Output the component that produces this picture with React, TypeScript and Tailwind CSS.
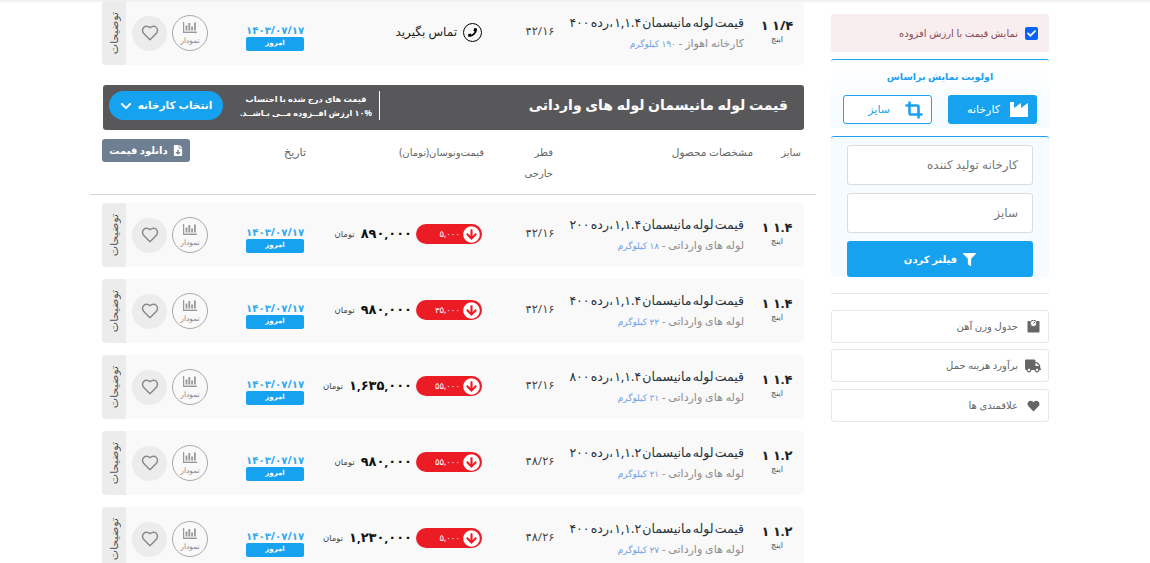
import React from "react";
import { FaArrowCircleDown, FaCheck, FaChevronDown, FaFileDownload, FaFilter, FaHeart, FaTruck, FaPhone } from "react-icons/fa";
import { LuCrop, LuHeart } from "react-icons/lu";

type Row = { size: string; title: string; sub: string; kg: string; od: string; drop: string; price: string };

const rows: Row[] = [
  { size: "۱ ۱.۴", title: "قیمت لوله مانیسمان ۱,۱.۴ ،رده ۲۰۰", sub: "لوله های وارداتی", kg: "۱۸ کیلوگرم", od: "۴۲/۱۶", drop: "۵,۰۰۰", price: "۸۹۰,۰۰۰" },
  { size: "۱ ۱.۴", title: "قیمت لوله مانیسمان ۱,۱.۴ ،رده ۴۰۰", sub: "لوله های وارداتی", kg: "۲۲ کیلوگرم", od: "۴۲/۱۶", drop: "۳۵,۰۰۰", price: "۹۸۰,۰۰۰" },
  { size: "۱ ۱.۴", title: "قیمت لوله مانیسمان ۱,۱.۴ ،رده ۸۰۰", sub: "لوله های وارداتی", kg: "۳۱ کیلوگرم", od: "۴۲/۱۶", drop: "۵۵,۰۰۰", price: "۱,۶۳۵,۰۰۰" },
  { size: "۱ ۱.۲", title: "قیمت لوله مانیسمان ۱,۱.۲ ،رده ۲۰۰", sub: "لوله های وارداتی", kg: "۲۱ کیلوگرم", od: "۴۸/۲۶", drop: "۵۵,۰۰۰", price: "۹۸۰,۰۰۰" },
  { size: "۱ ۱.۲", title: "قیمت لوله مانیسمان ۱,۱.۲ ،رده ۴۰۰", sub: "لوله های وارداتی", kg: "۲۷ کیلوگرم", od: "۴۸/۲۶", drop: "۵,۰۰۰", price: "۱,۲۳۰,۰۰۰" },
];

function ChartIcon() {
  return (
    <svg width="14" height="11" viewBox="0 0 14 11" fill="#999" aria-hidden="true">
      <rect x="0" y="0" width="1.2" height="11" />
      <rect x="0" y="9.6" width="14" height="1.4" />
      <rect x="2.6" y="3.5" width="1.8" height="5" />
      <rect x="5.4" y="1" width="1.8" height="7.5" />
      <rect x="8.2" y="4.5" width="1.8" height="4" />
      <rect x="11" y="0.5" width="1.8" height="8" />
    </svg>
  );
}

function Factory() {
  return (
    <svg width="18" height="15" viewBox="0 0 18 15" fill="#fff" aria-hidden="true">
      <path d="M0 0h4v6l7-5v5l7-5v14H0z" />
    </svg>
  );
}

function Scale() {
  return (
    <svg width="13" height="13" viewBox="0 0 13 13" aria-hidden="true">
      <path fill="#666" d="M1.5 1h1.2a4 4 0 0 0 7.6 0h1.2c.6 0 1 .4 1 1v9.5c0 .6-.4 1-1 1h-10c-.6 0-1-.4-1-1V2c0-.6.4-1 1-1z" />
      <circle cx="6.5" cy="3.4" r="3.2" fill="#fff" stroke="#666" strokeWidth="1" />
      <path d="M6.5 3.6 8 1.8" stroke="#666" strokeWidth="1" />
    </svg>
  );
}

function Tail() {
  return (
    <>
      <div className="flex w-[58px] shrink-0 flex-col items-stretch pt-[10px]">
        <span dir="ltr" className="text-center text-[10.2px] font-bold leading-[11px] text-[#35a8f0] whitespace-nowrap">۱۴۰۳/۰۷/۱۷</span>
        <span className="mt-[1px] flex h-[14px] items-start justify-center rounded-[2px] bg-[#16a2ef] text-[7px] font-bold leading-[11px] text-white">امروز</span>
      </div>
      <div className="w-[38px] shrink-0" />
      <div className="flex h-[36px] w-[36px] shrink-0 flex-col items-center justify-center rounded-full border border-[#a8a8a8]">
        <ChartIcon />
        <span className="mt-[3px] text-[7.5px] leading-[9px] text-[#888]">نمودار</span>
      </div>
      <div className="w-[5px] shrink-0" />
      <div className="flex h-[35px] w-[35px] shrink-0 items-center justify-center rounded-full bg-[#ececec]">
        <LuHeart className="h-[18px] w-[18px] text-[#8a8a8a]" />
      </div>
      <div className="w-[6px] shrink-0" />
      <div className="flex w-[24px] shrink-0 items-center justify-center self-stretch bg-[#ececec]">
        <span className="whitespace-nowrap text-[11px] leading-[12px] text-[#555] [writing-mode:vertical-rl] rotate-180">توضیحات</span>
      </div>
    </>
  );
}

function Head({ size, title, sub, kg, od }: { size: string; title: string; sub: string; kg: string; od: string }) {
  return (
    <>
      <div className="flex w-[54px] shrink-0 flex-col items-center pb-[6px]">
        <span dir="ltr" className="text-[13px] font-bold leading-[17px] text-[#222] whitespace-nowrap">{size}</span>
        <span className="text-[8px] leading-[10px] text-[#555]">اینچ</span>
      </div>
      <div className="w-[190px] shrink-0 pr-[6px]">
        <div className="whitespace-nowrap text-[12.5px] leading-[17px] text-[#26303a] [word-spacing:-2px]">{title}</div>
        <div className="mt-[4px] whitespace-nowrap text-[11px] leading-[16px] text-[#8d8d8d]">
          {sub} - <span className="text-[9px] text-[#6e9fe8]">{kg}</span>
        </div>
      </div>
      <div dir="ltr" className="w-[40px] shrink-0 pb-[4px] text-center text-[11.5px] text-[#444]">{od}</div>
      <div className="w-[38px] shrink-0" />
    </>
  );
}

function PriceRow({ r }: { r: Row }) {
  return (
    <div className="flex h-[64px] items-center overflow-hidden rounded-[4px] bg-[#f9f9f9]">
      <Head size={r.size} title={r.title} sub={r.sub} kg={r.kg} od={r.od} />
      <div className="flex w-[178px] shrink-0 items-center pb-[2px]">
        <div className="flex h-[20px] w-[66px] shrink-0 items-center rounded-full bg-[#ec1c24] pr-[2px] text-white">
          <FaArrowCircleDown className="h-[17px] w-[17px] shrink-0" />
          <span className="mr-[3px] text-[8.5px]">{r.drop}</span>
        </div>
        <span className="mr-[4px] whitespace-nowrap text-[13px] font-bold text-[#111]">{r.price}</span>
        <span className="mr-[6px] whitespace-nowrap text-[8.5px] text-[#444]">تومان</span>
      </div>
      <Tail />
    </div>
  );
}

function SideLink({ icon, label, className = "" }: { icon: React.ReactNode; label: string; className?: string }) {
  return (
    <div className={`flex h-[33px] items-center rounded-[3px] border border-[#e6e6e6] bg-white ${className}`}>
      <span className="flex w-[30px] shrink-0 justify-center text-[#666]">{icon}</span>
      <span className="text-[10px] text-[#666]">{label}</span>
    </div>
  );
}

export default function App() {
  return (
    <div dir="rtl" className="relative flex h-[563px] w-[1150px] items-start overflow-hidden bg-white pr-[101px] font-['Noto_Sans','DejaVu_Sans',sans-serif]">
      <div className="absolute inset-x-0 top-0 h-[3px] bg-gradient-to-b from-[#ededed] to-transparent" />
      <aside className="w-[218px] shrink-0 pt-[14px]">
        <div className="flex h-[38px] items-center gap-[7px] rounded-[3px] bg-[#f9eeef] pr-[11px] whitespace-nowrap">
          <span className="flex h-[13px] w-[13px] shrink-0 items-center justify-center rounded-[2px] bg-[#0b63f6] text-white">
            <FaCheck className="h-[9px] w-[9px]" />
          </span>
          <span className="text-[10px] text-[#8b4a55]">نمایش قیمت با ارزش افزوده</span>
        </div>
        <div className="mt-[7px] h-[69px] rounded-[3px] border-t border-[#1da1f2] bg-gradient-to-b from-white to-[#f4fbff] px-[12px] pt-[9px]">
          <div className="text-center text-[9.5px] font-bold leading-[16px] text-[#1da1f2]">اولویت نمایش براساس</div>
          <div className="mt-[10px] flex justify-between">
            <div className="flex h-[29px] w-[89px] shrink-0 items-center gap-[10px] rounded-[3px] bg-[#16a2ef] pr-[9px] text-[11px] text-white">
              <Factory /><span>کارخانه</span>
            </div>
            <div className="flex h-[29px] w-[89px] shrink-0 items-center gap-[15px] rounded-[3px] border border-[#1da1f2] bg-white pr-[8px] text-[11px] text-[#1da1f2]">
              <LuCrop className="h-[18px] w-[18px] stroke-[3.5]" /><span>سایز</span>
            </div>
          </div>
        </div>
        <div className="mt-[8px] h-[141px] rounded-[3px] border-t border-[#1da1f2] bg-[#f6fbff] px-[16px] pt-[8px]">
          <div className="flex h-[40px] items-center rounded-[3px] border border-[#dcdcdc] bg-white px-[14px] text-[12px] text-[#777]">کارخانه تولید کننده</div>
          <div className="mt-[8px] flex h-[40px] items-center rounded-[3px] border border-[#dcdcdc] bg-white px-[14px] text-[12px] text-[#777]">سایز</div>
          <div className="mt-[8px] flex h-[36px] items-center justify-center gap-[6px] rounded-[3px] bg-[#16a2ef] text-[10px] font-bold text-white">
            <FaFilter className="h-[13px] w-[13px]" /><span>فیلتر کردن</span>
          </div>
        </div>
        <div className="mt-[16px] flex flex-col gap-[6px] border-t border-[#e8e8e8] pt-[16px]">
          <SideLink icon={<Scale />} label="جدول وزن آهن" />
          <SideLink icon={<FaTruck className="h-[14px] w-[16px]" />} label="برآورد هزینه حمل" />
          <SideLink className="mt-[1px]" icon={<FaHeart className="h-[12px] w-[13px]" />} label="علاقمندی ها" />
        </div>
      </aside>

      <main className="mr-[15px] w-[726px] shrink-0 pl-[12px] pr-[12px] pt-[1px]">
        <div className="flex h-[64px] items-center overflow-hidden rounded-[4px] bg-[#f9f9f9]">
          <Head size="۱ ۱/۴" title="قیمت لوله مانیسمان ۱,۱.۴ ،رده ۴۰۰" sub="کارخانه اهواز" kg="۱۹۰ کیلوگرم" od="۴۲/۱۶" />
          <div className="flex w-[178px] shrink-0 items-center gap-[6px] pb-[2px] whitespace-nowrap text-[12px] text-[#222]">
            <span className="flex h-[19px] w-[19px] shrink-0 items-center justify-center rounded-full border border-black">
              <FaPhone className="h-[9px] w-[9px] text-black" />
            </span>
            <span>تماس بگیرید</span>
          </div>
          <Tail />
        </div>

        <div className="ml-[1px] mt-[20px] flex h-[45px] items-center rounded-[3px] bg-[#58585a] pb-[4px] pl-[6px] pr-[16px] text-white">
          <span className="whitespace-nowrap pb-[2px] text-[14px] font-bold">قیمت لوله مانیسمان لوله های وارداتی</span>
          <div className="mr-auto flex h-[29px] items-center border-r border-white pr-[7px] text-center text-[8.25px] font-bold leading-[14px]">
            <span className="block whitespace-nowrap">قیمت های درج شده با احتساب<br />۱۰% ارزش افــزوده مــی بـاشــد.</span>
          </div>
          <div className="mr-[17px] flex h-[29px] w-[114px] items-center justify-center gap-[6px] rounded-full bg-[#16a2ef] text-[10.5px] font-bold">
            <span>انتخاب کارخانه</span>
            <FaChevronDown className="h-[12px] w-[12px]" />
          </div>
        </div>

        <div className="mx-[-12px] mt-[9px] flex h-[56px] items-start border-b border-[#d5d5d5] text-[10px] text-[#666]">
          <div className="w-[63px] shrink-0 pr-[15px] pt-[5px] leading-[16px]">سایز</div>
          <div className="w-[200px] shrink-0 pt-[5px] text-[10.5px] leading-[16px]">مشخصات محصول</div>
          <div className="w-[69px] shrink-0 pt-[3px] leading-[21px]">قطر<br />خارجی</div>
          <div className="w-[178px] shrink-0 pt-[5px] leading-[16px]">قیمت‌ونوسان(تومان)</div>
          <div className="shrink-0 pt-[5px] text-[11px] leading-[16px]">تاریخ</div>
          <div className="ml-[12px] mr-auto flex h-[23px] w-[88px] items-center justify-center gap-[5px] rounded-[3px] bg-[#6f7f93] font-bold text-white">
            <FaFileDownload className="h-[11px] w-[10px]" />
            <span>دانلود قیمت</span>
          </div>
        </div>

        <div className="mt-[8px] flex flex-col gap-[12px]">
          {rows.map((r, i) => (
            <PriceRow key={i} r={r} />
          ))}
        </div>
      </main>
    </div>
  );
}
